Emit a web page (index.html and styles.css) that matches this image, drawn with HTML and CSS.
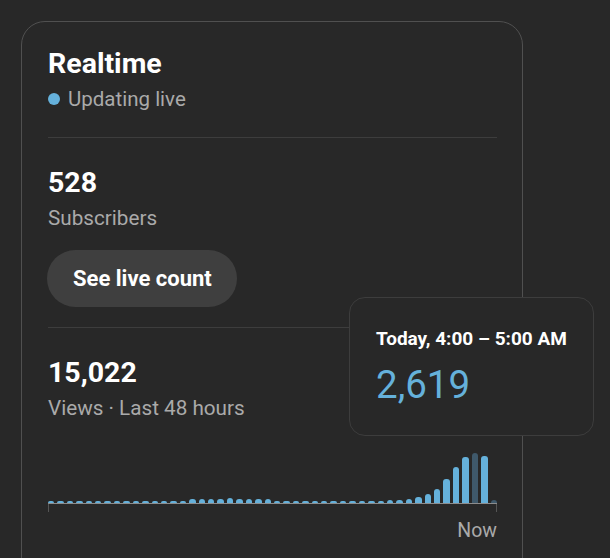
FILE: index.html
```html
<!DOCTYPE html>
<html lang="en">
<head>
    <meta charset="UTF-8">
    <title>Realtime</title>
    <link rel="stylesheet" href="styles.css">
</head>
<body>
    <div class="page">
        <!-- Realtime card -->
        <div class="realtime-card">
            <div class="card-header">
                <h2 class="card-title">Realtime</h2>
                <div class="live-status">
                    <span class="live-dot"></span>
                    <span>Updating live</span>
                </div>
            </div>

            <div class="card-section">
                <div class="metric-value">528</div>
                <div class="metric-label">Subscribers</div>
                <button class="live-count-btn">See live count</button>
            </div>

            <div class="card-section views-section">
                <div class="metric-value">15,022</div>
                <div class="metric-label">Views · Last 48 hours</div>

                <!-- 48 hourly bars -->
                <div class="chart">
                    <div class="bar" style="height:2px"></div>
                    <div class="bar" style="height:2px"></div>
                    <div class="bar" style="height:2px"></div>
                    <div class="bar" style="height:2px"></div>
                    <div class="bar" style="height:2px"></div>
                    <div class="bar" style="height:2px"></div>
                    <div class="bar" style="height:2px"></div>
                    <div class="bar" style="height:2px"></div>
                    <div class="bar" style="height:2px"></div>
                    <div class="bar" style="height:2px"></div>
                    <div class="bar" style="height:2px"></div>
                    <div class="bar" style="height:2px"></div>
                    <div class="bar" style="height:2px"></div>
                    <div class="bar" style="height:2px"></div>
                    <div class="bar" style="height:2px"></div>
                    <div class="bar" style="height:4px"></div>
                    <div class="bar" style="height:4px"></div>
                    <div class="bar" style="height:4px"></div>
                    <div class="bar" style="height:4px"></div>
                    <div class="bar" style="height:5px"></div>
                    <div class="bar" style="height:4px"></div>
                    <div class="bar" style="height:4px"></div>
                    <div class="bar" style="height:4px"></div>
                    <div class="bar" style="height:4px"></div>
                    <div class="bar" style="height:2px"></div>
                    <div class="bar" style="height:2px"></div>
                    <div class="bar" style="height:2px"></div>
                    <div class="bar" style="height:2px"></div>
                    <div class="bar" style="height:2px"></div>
                    <div class="bar" style="height:2px"></div>
                    <div class="bar" style="height:2px"></div>
                    <div class="bar" style="height:2px"></div>
                    <div class="bar" style="height:2px"></div>
                    <div class="bar" style="height:2px"></div>
                    <div class="bar" style="height:2px"></div>
                    <div class="bar" style="height:2px"></div>
                    <div class="bar" style="height:3px"></div>
                    <div class="bar" style="height:3px"></div>
                    <div class="bar" style="height:4px"></div>
                    <div class="bar" style="height:6px"></div>
                    <div class="bar" style="height:9px"></div>
                    <div class="bar" style="height:14px"></div>
                    <div class="bar" style="height:24px"></div>
                    <div class="bar" style="height:36px"></div>
                    <div class="bar" style="height:46px"></div>
                    <div class="bar bar-active" style="height:50px"></div>
                    <div class="bar" style="height:47px"></div>
                    <div class="bar bar-active" style="height:3px"></div>
                </div>
                <div class="chart-axis"></div>
                <div class="chart-label">Now</div>
            </div>
        </div>

        <!-- hover tooltip for the selected bar -->
        <div class="chart-tooltip">
            <div class="tooltip-title">Today, 4:00 – 5:00 AM</div>
            <div class="tooltip-value">2,619</div>
        </div>
    </div>
</body>
</html>
```

FILE: styles.css
```css
body {
    margin: 0;
    background: #282828;
    font-family: Roboto, "Liberation Sans", sans-serif;
    color: #fff;
}

.page {
    position: relative;
    height: 558px;
    overflow: hidden;
    padding: 21px 0 0 21px;
    box-sizing: border-box;
}

/* 卡片 */
.realtime-card {
    width: 502px;
    box-sizing: border-box;
    border: 1px solid #505050;
    border-radius: 24px;
    padding: 24px 25px 24px 26px;
}

.card-header {
    padding-bottom: 26px;
    border-bottom: 1px solid #3d3d3d;
}

.card-title {
    margin: 0;
    font-size: 28.5px;
    line-height: 36px;
    font-weight: 700;
}

.live-status {
    display: flex;
    align-items: center;
    gap: 8px;
    margin-top: 5px;
    font-size: 20.5px;
    line-height: 24px;
    color: #aaa;
}

.live-dot {
    width: 12px;
    height: 12px;
    border-radius: 50%;
    background: #65b1db;
}

.card-section {
    padding: 27px 0 20px;
    border-bottom: 1px solid #3d3d3d;
}

.views-section {
    border-bottom: none;
}

.metric-value {
    font-size: 28.5px;
    line-height: 36px;
    font-weight: 700;
}

.metric-label {
    margin-top: 5px;
    font-size: 20.7px;
    line-height: 24px;
    color: #aaa;
}

/* 按钮 */
.live-count-btn {
    margin: 20px 0 0 -1px;
    height: 57px;
    padding: 0 25px 0 26px;
    border: none;
    border-radius: 29px;
    background: #3f3f3f;
    color: #fff;
    font-family: inherit;
    font-size: 22px;
    font-weight: 700;
    cursor: pointer;
}

/* 柱状图 */
.chart {
    display: grid;
    grid-template-columns: repeat(48, 1fr);
    column-gap: 3px;
    align-items: end;
    height: 60px;
    margin-top: 23px;
    border-bottom: 1px solid #8c8c8c;
}

.bar {
    background: #65b1db;
    border-radius: 3px 3px 0 0;
}

.bar-active {
    background: #3f596b;
}

.chart-axis {
    height: 8px;
    border-left: 1px solid #555;
    border-right: 1px solid #555;
}

.chart-label {
    margin-top: 7px;
    text-align: right;
    font-size: 19.5px;
    line-height: 24px;
    color: #aaa;
}

/* 提示框 */
.chart-tooltip {
    position: absolute;
    left: 349px;
    top: 297px;
    width: 245px;
    height: 139px;
    box-sizing: border-box;
    padding: 30px 26px 0;
    background: #282828;
    border: 1px solid #3d3d3d;
    border-radius: 16px;
}

.tooltip-title {
    font-size: 19px;
    line-height: 22px;
    font-weight: 700;
}

.tooltip-value {
    margin-top: 12px;
    font-size: 38.5px;
    line-height: 46px;
    color: #65b1db;
}
```
